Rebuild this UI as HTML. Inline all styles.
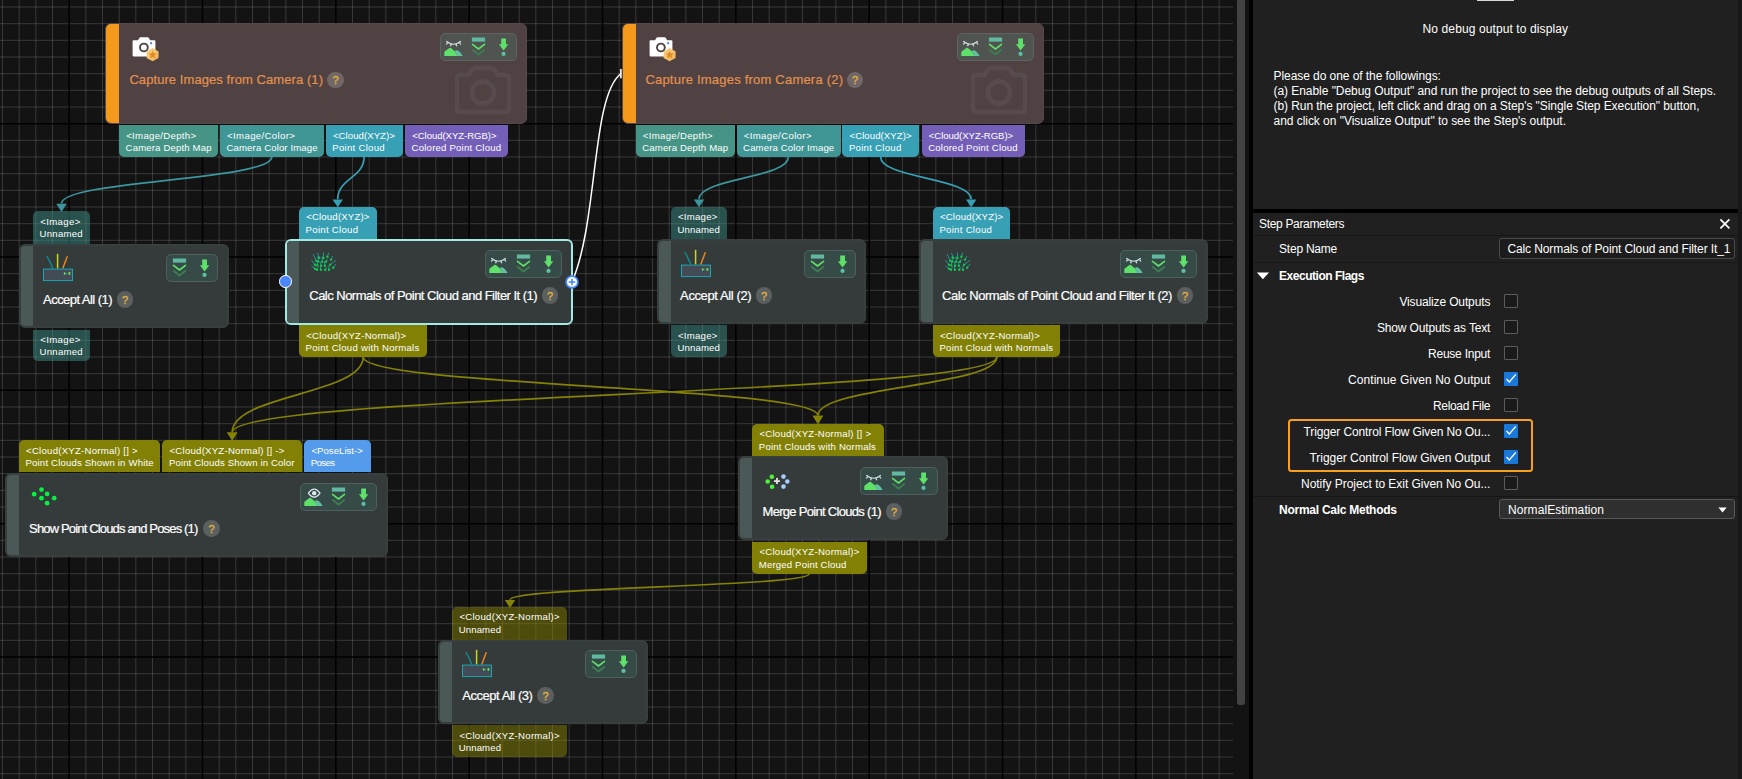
<!DOCTYPE html>
<html><head><meta charset="utf-8"><title>Graph Editor</title>
<style>
html,body{margin:0;padding:0}
body{width:1742px;height:779px;background:#131313;position:relative;overflow:hidden;font-family:"Liberation Sans",sans-serif}
.t{position:absolute;white-space:pre;margin:0;padding:0}
</style></head><body>
<svg style="position:absolute;left:0;top:0" width="1233" height="779" viewBox="0 0 1233 779"><path d="M2.5 0V779M19.17 0V779M35.83 0V779M52.5 0V779M85.84 0V779M102.5 0V779M119.17 0V779M135.84 0V779M152.5 0V779M169.17 0V779M185.84 0V779M219.17 0V779M235.84 0V779M252.51 0V779M269.17 0V779M285.84 0V779M302.51 0V779M319.17 0V779M352.51 0V779M369.17 0V779M385.84 0V779M402.51 0V779M419.18 0V779M435.84 0V779M452.51 0V779M485.84 0V779M502.51 0V779M519.18 0V779M535.84 0V779M552.51 0V779M569.18 0V779M585.85 0V779M619.18 0V779M635.85 0V779M652.51 0V779M669.18 0V779M685.85 0V779M702.51 0V779M719.18 0V779M752.52 0V779M769.18 0V779M785.85 0V779M802.52 0V779M819.18 0V779M835.85 0V779M852.52 0V779M885.85 0V779M902.52 0V779M919.19 0V779M935.85 0V779M952.52 0V779M969.19 0V779M985.85 0V779M1019.19 0V779M1035.85 0V779M1052.52 0V779M1069.19 0V779M1085.86 0V779M1102.52 0V779M1119.19 0V779M1152.52 0V779M1169.19 0V779M1185.86 0V779M1202.52 0V779M1219.19 0V779" stroke="#fff" stroke-opacity="0.155" stroke-width="1" fill="none"/><path d="M0 7.0H1233M0 23.67H1233M0 40.33H1233M0 57.0H1233M0 73.67H1233M0 90.34H1233M0 107.0H1233M0 140.34H1233M0 157.0H1233M0 173.67H1233M0 190.34H1233M0 207.0H1233M0 223.67H1233M0 240.34H1233M0 273.67H1233M0 290.34H1233M0 307.01H1233M0 323.67H1233M0 340.34H1233M0 357.01H1233M0 373.67H1233M0 407.01H1233M0 423.68H1233M0 440.34H1233M0 457.01H1233M0 473.68H1233M0 490.34H1233M0 507.01H1233M0 540.34H1233M0 557.01H1233M0 573.68H1233M0 590.35H1233M0 607.01H1233M0 623.68H1233M0 640.35H1233M0 673.68H1233M0 690.35H1233M0 707.01H1233M0 723.68H1233M0 740.35H1233M0 757.02H1233M0 773.68H1233" stroke="#fff" stroke-opacity="0.155" stroke-width="1" fill="none"/><path d="M69.17 0V779M202.5 0V779M335.84 0V779M469.18 0V779M602.51 0V779M735.85 0V779M869.18 0V779M1002.52 0V779M1135.86 0V779M0 123.67H1233M0 257.0H1233M0 390.34H1233M0 523.68H1233M0 657.01H1233" stroke="#000" stroke-width="1.5" fill="none"/></svg>
<svg style="position:absolute;left:0;top:0" width="1233" height="779" viewBox="0 0 1233 779"><path d="M271.8 157 C271.8 180.3 61.5 180.3 61.5 203.6" fill="none" stroke="#3c969e" stroke-width="1.7"/><path d="M56.3 203.8 L66.7 203.8 L61.5 212.1 Z" fill="#3c969e"/><path d="M364.1 157 C364.1 178.1 337.7 178.1 337.7 199.2" fill="none" stroke="#37a0b5" stroke-width="1.7"/><path d="M332.5 199.4 L342.9 199.4 L337.7 207.3 Z" fill="#37a0b5"/><path d="M788.4 157 C788.4 178.1 699 178.1 699 199.2" fill="none" stroke="#3c969e" stroke-width="1.7"/><path d="M693.8 199.4 L704.2 199.4 L699 207.2 Z" fill="#3c969e"/><path d="M880.6 157 C880.6 178.1 971.2 178.1 971.2 199.2" fill="none" stroke="#37a0b5" stroke-width="1.7"/><path d="M966.0 199.4 L976.4000000000001 199.4 L971.2 207.2 Z" fill="#37a0b5"/><path d="M363.2 357 C363.2 394.6 232.2 394.6 232.2 432.3" fill="none" stroke="#858307" stroke-width="1.7"/><path d="M227.0 432.5 L237.39999999999998 432.5 L232.2 440.6 Z" fill="#858307"/><path d="M996.8 357 C996.8 394.6 232.2 394.6 232.2 432.3" fill="none" stroke="#858307" stroke-width="1.7"/><path d="M227.0 432.5 L237.39999999999998 432.5 L232.2 440.6 Z" fill="#858307"/><path d="M363.2 357 C363.2 386.3 817.9 386.3 817.9 415.6" fill="none" stroke="#858307" stroke-width="1.7"/><path d="M812.6999999999999 415.8 L823.1 415.8 L817.9 423.9 Z" fill="#858307"/><path d="M996.8 357 C996.8 386.3 817.9 386.3 817.9 415.6" fill="none" stroke="#858307" stroke-width="1.7"/><path d="M812.6999999999999 415.8 L823.1 415.8 L817.9 423.9 Z" fill="#858307"/><path d="M809.3 573.7 C809.3 586.8 510 586.8 510 599.8" fill="none" stroke="#858307" stroke-width="1.7"/><path d="M504.8 600.0 L515.2 600.0 L510 607.9 Z" fill="#858307"/><path d="M572 282 C598.4 221.3 591.1 96.1 621 73.5" fill="none" stroke="#fff" stroke-width="1.5"/><path d="M620.9 69 L620.9 78.2" stroke="#fff" stroke-width="1.6"/></svg>
<div style="position:absolute;left:119px;top:124.7px;width:99.3px;height:32.1px;background:#469485;border-radius:0 0 5px 5px"></div>
<div style="position:absolute;left:219.9px;top:124.7px;width:104.3px;height:32.1px;background:#409595;border-radius:0 0 5px 5px"></div>
<div style="position:absolute;left:325.7px;top:124.7px;width:77.2px;height:32.1px;background:#37a0b5;border-radius:0 0 5px 5px"></div>
<div style="position:absolute;left:405px;top:124.7px;width:103px;height:32.1px;background:#745fb8;border-radius:0 0 5px 5px"></div>
<div style="position:absolute;left:635.6px;top:124.7px;width:99.3px;height:32.1px;background:#469485;border-radius:0 0 5px 5px"></div>
<div style="position:absolute;left:736.5px;top:124.7px;width:104.3px;height:32.1px;background:#409595;border-radius:0 0 5px 5px"></div>
<div style="position:absolute;left:842.3px;top:124.7px;width:77.2px;height:32.1px;background:#37a0b5;border-radius:0 0 5px 5px"></div>
<div style="position:absolute;left:921.6px;top:124.7px;width:103.0px;height:32.1px;background:#745fb8;border-radius:0 0 5px 5px"></div>
<div style="position:absolute;left:33px;top:211px;width:57.2px;height:34px;background:rgba(64,146,138,0.5);border-radius:5px 5px 0 0"></div>
<div style="position:absolute;left:33px;top:329.5px;width:57.2px;height:31.5px;background:rgba(64,146,138,0.5);border-radius:0 0 5px 5px"></div>
<div style="position:absolute;left:299px;top:206.9px;width:78px;height:33.1px;background:#37a0b5;border-radius:5px 5px 0 0"></div>
<div style="position:absolute;left:299px;top:324px;width:128.1px;height:33px;background:#828105;border-radius:0 0 5px 5px"></div>
<div style="position:absolute;left:670.8px;top:206.9px;width:56.5px;height:34.1px;background:rgba(64,146,138,0.5);border-radius:5px 5px 0 0"></div>
<div style="position:absolute;left:670.8px;top:324.9px;width:56.5px;height:32.1px;background:rgba(64,146,138,0.5);border-radius:0 0 5px 5px"></div>
<div style="position:absolute;left:932.8px;top:206.9px;width:77.6px;height:33.6px;background:#37a0b5;border-radius:5px 5px 0 0"></div>
<div style="position:absolute;left:932.8px;top:324.9px;width:127.4px;height:32.1px;background:#828105;border-radius:0 0 5px 5px"></div>
<div style="position:absolute;left:18.9px;top:440.1px;width:141.5px;height:31.9px;background:#828105;border-radius:5px 5px 0 0"></div>
<div style="position:absolute;left:162.3px;top:440.1px;width:139.7px;height:31.9px;background:#828105;border-radius:5px 5px 0 0"></div>
<div style="position:absolute;left:304.2px;top:440.1px;width:66.7px;height:31.9px;background:#559beb;border-radius:5px 5px 0 0"></div>
<div style="position:absolute;left:752.2px;top:424.2px;width:131.6px;height:33.8px;background:#828105;border-radius:5px 5px 0 0"></div>
<div style="position:absolute;left:752.2px;top:542px;width:115.2px;height:31.8px;background:#828105;border-radius:0 0 5px 5px"></div>
<div style="position:absolute;left:452.2px;top:606.9px;width:115.0px;height:33.1px;background:rgba(136,134,6,0.5);border-radius:5px 5px 0 0"></div>
<div style="position:absolute;left:452.2px;top:725px;width:115.0px;height:31.7px;background:rgba(136,134,6,0.5);border-radius:0 0 5px 5px"></div>
<div style="position:absolute;left:105.2px;top:23.1px;width:420.0px;height:99.1px;background:#504242;border:1px solid #55474b;border-radius:6px;overflow:hidden"><div style="position:absolute;left:0;top:0;width:12.8px;height:100%;background:#f3991c"></div></div>
<svg style="position:absolute;left:453.5px;top:64px" width="58" height="52" viewBox="0 0 58 52">
<path d="M6 11 L14.5 11 L18 5.5 Q19 4 21 4 L37 4 Q39 4 40 5.5 L43.5 11 L52 11 Q55 11 55 14 L55 45 Q55 48 52 48 L6 48 Q3 48 3 45 L3 14 Q3 11 6 11 Z" fill="none" stroke="#584b4e" stroke-width="4.6" stroke-linejoin="round"/>
<circle cx="29" cy="28.5" r="11" fill="none" stroke="#584b4e" stroke-width="4.8"/>
</svg>
<svg style="position:absolute;left:130px;top:35px" width="32" height="28" viewBox="0 0 32 28">
<defs><linearGradient id="hx130" x1="0" y1="0" x2="1" y2="1"><stop offset="0" stop-color="#fad488"/><stop offset="1" stop-color="#f0ad55"/></linearGradient></defs>
<path d="M3.6 5.2 L8 5.2 L9.4 2.9 Q9.8 2.3 10.6 2.3 L17.6 2.3 Q18.4 2.3 18.8 2.9 L20.2 5.2 L24.4 5.2 Q25.4 5.2 25.4 6.2 L25.4 20.3 Q25.4 21.4 24.4 21.4 L3.6 21.4 Q2.6 21.4 2.6 20.3 L2.6 6.2 Q2.6 5.2 3.6 5.2 Z" fill="#fff"/>
<circle cx="13.9" cy="12.5" r="3.9" fill="none" stroke="#504242" stroke-width="1.9"/>
<rect x="20.1" y="7.2" width="2" height="2" fill="#4285f4"/>
<path d="M22.6 13.1 L28.6 16.4 L28.6 23 L22.6 26.3 L16.6 23 L16.6 16.4 Z" fill="url(#hx130)"/>
<path d="M22.6 15.6 L23.7 18.5 L26.8 18.6 L24.4 20.5 L25.2 23.5 L22.6 21.8 L20 23.5 L20.8 20.5 L18.4 18.6 L21.5 18.5 Z" fill="#e08a22"/>
</svg>
<div style="position:absolute;left:439.49999999999994px;top:33.2px;width:75.3px;height:25.9px;background:#4f5450;border:1px solid #5f6461;border-radius:5px"></div><svg style="position:absolute;left:439.5px;top:33.2px" width="26" height="28" viewBox="0 0 26 28">
<path d="M4.3 22.9 L4.3 19.7 Q4.3 18.8 5 18.3 L8.7 15.4 Q10.1 14.3 11.5 15.4 L15.3 18.7 L17.3 22.9 Z" fill="#5ee06a"/>
<path d="M14.7 18.2 Q16.5 16.5 18.6 18 Q21 19.8 22.7 22.9 L17.2 22.9 L15.3 18.7 Z" fill="#62bfa0"/>
<path d="M6.3 8.2 Q13.55 14.3 20.8 8.2" fill="none" stroke="#d9e2ea" stroke-width="1.15"/>
<path d="M7.6 9.6 L6.4 11.5 M11.4 11.0 L10.6 13.3 M15.8 11.0 L16.8 13.3 M19.6 9.6 L20.9 11.5" stroke="#d9e2ea" stroke-width="1.25" fill="none"/>
</svg><svg style="position:absolute;left:465.5px;top:33.2px" width="25" height="28" viewBox="0 0 25 28">
<rect x="5.9" y="4.5" width="13.2" height="4.1" fill="#62b9a2"/>
<path d="M6.5 11.3 L12.5 16 L18.5 11.3" fill="none" stroke="#5ee06a" stroke-width="1.6" stroke-linecap="round" stroke-linejoin="round"/>
<path d="M6.8 17 L12.5 21.5 L18.2 17" fill="none" stroke="#3f7d53" stroke-width="1.7" stroke-linecap="round" stroke-linejoin="round"/>
</svg><svg style="position:absolute;left:490.5px;top:33.2px" width="25" height="28" viewBox="0 0 25 28">
<path d="M10.2 5.5 L15 5.5 L15 11.2 L17.3 11.2 L12.6 17.6 L7.9 11.2 L10.2 11.2 Z" fill="#5ee06a"/>
<circle cx="12.5" cy="20.9" r="2.1" fill="#5cc0a2"/>
</svg>
<div style="position:absolute;left:327.3px;top:71.8px;width:16.4px;height:16.4px;border-radius:50%;background:#726767"></div>
<div style="position:absolute;left:622.2px;top:23.1px;width:420.0px;height:99.1px;background:#504242;border:1px solid #55474b;border-radius:6px;overflow:hidden"><div style="position:absolute;left:0;top:0;width:12.8px;height:100%;background:#f3991c"></div></div>
<svg style="position:absolute;left:970.1px;top:64px" width="58" height="52" viewBox="0 0 58 52">
<path d="M6 11 L14.5 11 L18 5.5 Q19 4 21 4 L37 4 Q39 4 40 5.5 L43.5 11 L52 11 Q55 11 55 14 L55 45 Q55 48 52 48 L6 48 Q3 48 3 45 L3 14 Q3 11 6 11 Z" fill="none" stroke="#584b4e" stroke-width="4.6" stroke-linejoin="round"/>
<circle cx="29" cy="28.5" r="11" fill="none" stroke="#584b4e" stroke-width="4.8"/>
</svg>
<svg style="position:absolute;left:646.6px;top:35px" width="32" height="28" viewBox="0 0 32 28">
<defs><linearGradient id="hx646.6" x1="0" y1="0" x2="1" y2="1"><stop offset="0" stop-color="#fad488"/><stop offset="1" stop-color="#f0ad55"/></linearGradient></defs>
<path d="M3.6 5.2 L8 5.2 L9.4 2.9 Q9.8 2.3 10.6 2.3 L17.6 2.3 Q18.4 2.3 18.8 2.9 L20.2 5.2 L24.4 5.2 Q25.4 5.2 25.4 6.2 L25.4 20.3 Q25.4 21.4 24.4 21.4 L3.6 21.4 Q2.6 21.4 2.6 20.3 L2.6 6.2 Q2.6 5.2 3.6 5.2 Z" fill="#fff"/>
<circle cx="13.9" cy="12.5" r="3.9" fill="none" stroke="#504242" stroke-width="1.9"/>
<rect x="20.1" y="7.2" width="2" height="2" fill="#4285f4"/>
<path d="M22.6 13.1 L28.6 16.4 L28.6 23 L22.6 26.3 L16.6 23 L16.6 16.4 Z" fill="url(#hx646.6)"/>
<path d="M22.6 15.6 L23.7 18.5 L26.8 18.6 L24.4 20.5 L25.2 23.5 L22.6 21.8 L20 23.5 L20.8 20.5 L18.4 18.6 L21.5 18.5 Z" fill="#e08a22"/>
</svg>
<div style="position:absolute;left:956.5px;top:33.2px;width:75.3px;height:25.9px;background:#4f5450;border:1px solid #5f6461;border-radius:5px"></div><svg style="position:absolute;left:956.5px;top:33.2px" width="26" height="28" viewBox="0 0 26 28">
<path d="M4.3 22.9 L4.3 19.7 Q4.3 18.8 5 18.3 L8.7 15.4 Q10.1 14.3 11.5 15.4 L15.3 18.7 L17.3 22.9 Z" fill="#5ee06a"/>
<path d="M14.7 18.2 Q16.5 16.5 18.6 18 Q21 19.8 22.7 22.9 L17.2 22.9 L15.3 18.7 Z" fill="#62bfa0"/>
<path d="M6.3 8.2 Q13.55 14.3 20.8 8.2" fill="none" stroke="#d9e2ea" stroke-width="1.15"/>
<path d="M7.6 9.6 L6.4 11.5 M11.4 11.0 L10.6 13.3 M15.8 11.0 L16.8 13.3 M19.6 9.6 L20.9 11.5" stroke="#d9e2ea" stroke-width="1.25" fill="none"/>
</svg><svg style="position:absolute;left:982.5px;top:33.2px" width="25" height="28" viewBox="0 0 25 28">
<rect x="5.9" y="4.5" width="13.2" height="4.1" fill="#62b9a2"/>
<path d="M6.5 11.3 L12.5 16 L18.5 11.3" fill="none" stroke="#5ee06a" stroke-width="1.6" stroke-linecap="round" stroke-linejoin="round"/>
<path d="M6.8 17 L12.5 21.5 L18.2 17" fill="none" stroke="#3f7d53" stroke-width="1.7" stroke-linecap="round" stroke-linejoin="round"/>
</svg><svg style="position:absolute;left:1007.5px;top:33.2px" width="25" height="28" viewBox="0 0 25 28">
<path d="M10.2 5.5 L15 5.5 L15 11.2 L17.3 11.2 L12.6 17.6 L7.9 11.2 L10.2 11.2 Z" fill="#5ee06a"/>
<circle cx="12.5" cy="20.9" r="2.1" fill="#5cc0a2"/>
</svg>
<div style="position:absolute;left:846.9px;top:71.8px;width:16.4px;height:16.4px;border-radius:50%;background:#726767"></div>
<div style="position:absolute;left:19.1px;top:243.7px;width:205.8px;height:80.3px;background:#353b3b;border:2px solid #383f3f;border-radius:6px;overflow:hidden"><div style="position:absolute;left:0;top:0;width:12px;height:100%;background:#4a5857"></div></div>
<svg style="position:absolute;left:40px;top:250px" width="36" height="34" viewBox="0 0 36 34">
<path d="M6.8 6.2 Q9.5 10.5 12.8 18.4" stroke="#0f8c8c" stroke-width="1.4" fill="none"/>
<path d="M17.6 3.8 L17.6 18.4" stroke="#c6d621" stroke-width="1.5" fill="none"/>
<path d="M27.4 6.2 L22.7 18.4" stroke="#e8861f" stroke-width="1.5" fill="none"/>
<rect x="3.5" y="19.1" width="29" height="11.5" fill="#434b57" stroke="#1aa7b2" stroke-width="1"/>
<path d="M23.9 21.9 L26.8 23.4 L23.9 24.9 Z" fill="#5ee06a"/>
<rect x="28.5" y="22" width="1.8" height="2.8" fill="#5ee06a"/>
</svg>
<div style="position:absolute;left:166.10000000000002px;top:253.89999999999998px;width:50.3px;height:25.9px;background:#364b47;border:1px solid #4c615d;border-radius:5px"></div><svg style="position:absolute;left:167.1px;top:253.89999999999998px" width="25" height="28" viewBox="0 0 25 28">
<rect x="5.9" y="4.5" width="13.2" height="4.1" fill="#62b9a2"/>
<path d="M6.5 11.3 L12.5 16 L18.5 11.3" fill="none" stroke="#5ee06a" stroke-width="1.6" stroke-linecap="round" stroke-linejoin="round"/>
<path d="M6.8 17 L12.5 21.5 L18.2 17" fill="none" stroke="#3f7d53" stroke-width="1.7" stroke-linecap="round" stroke-linejoin="round"/>
</svg><svg style="position:absolute;left:192.1px;top:253.89999999999998px" width="25" height="28" viewBox="0 0 25 28">
<path d="M10.2 5.5 L15 5.5 L15 11.2 L17.3 11.2 L12.6 17.6 L7.9 11.2 L10.2 11.2 Z" fill="#5ee06a"/>
<circle cx="12.5" cy="20.9" r="2.1" fill="#5cc0a2"/>
</svg>
<div style="position:absolute;left:116.7px;top:291.3px;width:16.4px;height:16.4px;border-radius:50%;background:#5b5f5f"></div>
<div style="position:absolute;left:285px;top:239.2px;width:283.7px;height:81.4px;background:#353b3b;border:2px solid #a2ebe2;border-radius:6px;overflow:hidden"><div style="position:absolute;left:0;top:0;width:12px;height:100%;background:#4a5857"></div></div>
<svg style="position:absolute;left:300px;top:245px" width="50" height="35" viewBox="0 0 50 35"><path d="M19.1 12.8 L17.7 8.3" stroke="#1fb3b0" stroke-width="0.95" stroke-linecap="round" opacity="0.8"/><path d="M23.4 13.0 L23.6 7.9" stroke="#1fb3b0" stroke-width="0.95" stroke-linecap="round" opacity="0.8"/><path d="M27.4 11.7 L28.7 7.9" stroke="#1fb3b0" stroke-width="0.95" stroke-linecap="round" opacity="0.8"/><path d="M16.2 15.7 L13.3 9.4" stroke="#1fb3b0" stroke-width="0.95" stroke-linecap="round" opacity="0.8"/><path d="M18.4 16.6 L18.0 11.5" stroke="#1fb3b0" stroke-width="0.95" stroke-linecap="round" opacity="0.8"/><path d="M22.2 16.8 L22.0 12.0" stroke="#1fb3b0" stroke-width="0.95" stroke-linecap="round" opacity="0.8"/><path d="M26.0 16.8 L27.3 14.3" stroke="#1fb3b0" stroke-width="0.95" stroke-linecap="round" opacity="0.8"/><path d="M31.0 14.6 L32.6 11.5" stroke="#1fb3b0" stroke-width="0.95" stroke-linecap="round" opacity="0.8"/><path d="M15.0 19.8 L11.7 15.5" stroke="#1fb3b0" stroke-width="0.95" stroke-linecap="round" opacity="0.8"/><path d="M17.3 20.4 L17.6 16.5" stroke="#1fb3b0" stroke-width="0.95" stroke-linecap="round" opacity="0.8"/><path d="M21.1 20.7 L20.5 17.2" stroke="#1fb3b0" stroke-width="0.95" stroke-linecap="round" opacity="0.8"/><path d="M24.9 20.7 L24.3 16.8" stroke="#1fb3b0" stroke-width="0.95" stroke-linecap="round" opacity="0.8"/><path d="M30.1 19.8 L35.7 15.5" stroke="#1fb3b0" stroke-width="0.95" stroke-linecap="round" opacity="0.8"/><path d="M15.0 23.8 L11.7 21.1" stroke="#1fb3b0" stroke-width="0.95" stroke-linecap="round" opacity="0.8"/><path d="M17.0 24.7 L18.3 22.2" stroke="#1fb3b0" stroke-width="0.95" stroke-linecap="round" opacity="0.8"/><path d="M20.9 24.7 L20.3 21.6" stroke="#1fb3b0" stroke-width="0.95" stroke-linecap="round" opacity="0.8"/><path d="M25.2 24.7 L26.4 22.2" stroke="#1fb3b0" stroke-width="0.95" stroke-linecap="round" opacity="0.8"/><path d="M29.0 24.7 L28.8 21.2" stroke="#1fb3b0" stroke-width="0.95" stroke-linecap="round" opacity="0.8"/><path d="M33.2 22.7 L35.9 19.1" stroke="#1fb3b0" stroke-width="0.95" stroke-linecap="round" opacity="0.8"/><circle cx="19.1" cy="12.8" r="1.2" fill="#10c850"/><circle cx="23.4" cy="13.0" r="1.2" fill="#10c850"/><circle cx="27.4" cy="11.7" r="1.2" fill="#10c850"/><circle cx="16.2" cy="15.7" r="1.2" fill="#10c850"/><circle cx="18.4" cy="16.6" r="1.2" fill="#10c850"/><circle cx="22.2" cy="16.8" r="1.2" fill="#10c850"/><circle cx="26.0" cy="16.8" r="1.2" fill="#10c850"/><circle cx="31.0" cy="14.6" r="1.2" fill="#10c850"/><circle cx="15.0" cy="19.8" r="1.2" fill="#10c850"/><circle cx="17.3" cy="20.4" r="1.2" fill="#10c850"/><circle cx="21.1" cy="20.7" r="1.2" fill="#10c850"/><circle cx="24.9" cy="20.7" r="1.2" fill="#10c850"/><circle cx="30.1" cy="19.8" r="1.2" fill="#10c850"/><circle cx="15.0" cy="23.8" r="1.2" fill="#10c850"/><circle cx="17.0" cy="24.7" r="1.2" fill="#10c850"/><circle cx="20.9" cy="24.7" r="1.2" fill="#10c850"/><circle cx="25.2" cy="24.7" r="1.2" fill="#10c850"/><circle cx="29.0" cy="24.7" r="1.2" fill="#10c850"/><circle cx="33.2" cy="22.7" r="1.2" fill="#10c850"/></svg>
<div style="position:absolute;left:484.90000000000003px;top:250.1px;width:75.3px;height:25.9px;background:#364b47;border:1px solid #4c615d;border-radius:5px"></div><svg style="position:absolute;left:484.9px;top:250.1px" width="26" height="28" viewBox="0 0 26 28">
<path d="M4.3 22.9 L4.3 19.7 Q4.3 18.8 5 18.3 L8.7 15.4 Q10.1 14.3 11.5 15.4 L15.3 18.7 L17.3 22.9 Z" fill="#5ee06a"/>
<path d="M14.7 18.2 Q16.5 16.5 18.6 18 Q21 19.8 22.7 22.9 L17.2 22.9 L15.3 18.7 Z" fill="#62bfa0"/>
<path d="M6.3 8.2 Q13.55 14.3 20.8 8.2" fill="none" stroke="#d9e2ea" stroke-width="1.15"/>
<path d="M7.6 9.6 L6.4 11.5 M11.4 11.0 L10.6 13.3 M15.8 11.0 L16.8 13.3 M19.6 9.6 L20.9 11.5" stroke="#d9e2ea" stroke-width="1.25" fill="none"/>
</svg><svg style="position:absolute;left:510.9px;top:250.1px" width="25" height="28" viewBox="0 0 25 28">
<rect x="5.9" y="4.5" width="13.2" height="4.1" fill="#62b9a2"/>
<path d="M6.5 11.3 L12.5 16 L18.5 11.3" fill="none" stroke="#5ee06a" stroke-width="1.6" stroke-linecap="round" stroke-linejoin="round"/>
<path d="M6.8 17 L12.5 21.5 L18.2 17" fill="none" stroke="#3f7d53" stroke-width="1.7" stroke-linecap="round" stroke-linejoin="round"/>
</svg><svg style="position:absolute;left:535.9px;top:250.1px" width="25" height="28" viewBox="0 0 25 28">
<path d="M10.2 5.5 L15 5.5 L15 11.2 L17.3 11.2 L12.6 17.6 L7.9 11.2 L10.2 11.2 Z" fill="#5ee06a"/>
<circle cx="12.5" cy="20.9" r="2.1" fill="#5cc0a2"/>
</svg>
<div style="position:absolute;left:541.9px;top:287.3px;width:16.4px;height:16.4px;border-radius:50%;background:#5b5f5f"></div>
<div style="position:absolute;left:656.9px;top:239.4px;width:205.4px;height:80.4px;background:#353b3b;border:2px solid #383f3f;border-radius:6px;overflow:hidden"><div style="position:absolute;left:0;top:0;width:12px;height:100%;background:#4a5857"></div></div>
<svg style="position:absolute;left:677.8px;top:246px" width="36" height="34" viewBox="0 0 36 34">
<path d="M6.8 6.2 Q9.5 10.5 12.8 18.4" stroke="#0f8c8c" stroke-width="1.4" fill="none"/>
<path d="M17.6 3.8 L17.6 18.4" stroke="#c6d621" stroke-width="1.5" fill="none"/>
<path d="M27.4 6.2 L22.7 18.4" stroke="#e8861f" stroke-width="1.5" fill="none"/>
<rect x="3.5" y="19.1" width="29" height="11.5" fill="#434b57" stroke="#1aa7b2" stroke-width="1"/>
<path d="M23.9 21.9 L26.8 23.4 L23.9 24.9 Z" fill="#5ee06a"/>
<rect x="28.5" y="22" width="1.8" height="2.8" fill="#5ee06a"/>
</svg>
<div style="position:absolute;left:803.5px;top:250.20000000000002px;width:50.3px;height:25.9px;background:#364b47;border:1px solid #4c615d;border-radius:5px"></div><svg style="position:absolute;left:804.5px;top:250.20000000000002px" width="25" height="28" viewBox="0 0 25 28">
<rect x="5.9" y="4.5" width="13.2" height="4.1" fill="#62b9a2"/>
<path d="M6.5 11.3 L12.5 16 L18.5 11.3" fill="none" stroke="#5ee06a" stroke-width="1.6" stroke-linecap="round" stroke-linejoin="round"/>
<path d="M6.8 17 L12.5 21.5 L18.2 17" fill="none" stroke="#3f7d53" stroke-width="1.7" stroke-linecap="round" stroke-linejoin="round"/>
</svg><svg style="position:absolute;left:829.5px;top:250.20000000000002px" width="25" height="28" viewBox="0 0 25 28">
<path d="M10.2 5.5 L15 5.5 L15 11.2 L17.3 11.2 L12.6 17.6 L7.9 11.2 L10.2 11.2 Z" fill="#5ee06a"/>
<circle cx="12.5" cy="20.9" r="2.1" fill="#5cc0a2"/>
</svg>
<div style="position:absolute;left:755.9px;top:287.3px;width:16.4px;height:16.4px;border-radius:50%;background:#5b5f5f"></div>
<div style="position:absolute;left:918.8px;top:239.4px;width:285.2px;height:80.4px;background:#353b3b;border:2px solid #383f3f;border-radius:6px;overflow:hidden"><div style="position:absolute;left:0;top:0;width:12px;height:100%;background:#4a5857"></div></div>
<svg style="position:absolute;left:933.5px;top:245px" width="50" height="35" viewBox="0 0 50 35"><path d="M19.1 12.8 L17.7 8.3" stroke="#1fb3b0" stroke-width="0.95" stroke-linecap="round" opacity="0.8"/><path d="M23.4 13.0 L23.6 7.9" stroke="#1fb3b0" stroke-width="0.95" stroke-linecap="round" opacity="0.8"/><path d="M27.4 11.7 L28.7 7.9" stroke="#1fb3b0" stroke-width="0.95" stroke-linecap="round" opacity="0.8"/><path d="M16.2 15.7 L13.3 9.4" stroke="#1fb3b0" stroke-width="0.95" stroke-linecap="round" opacity="0.8"/><path d="M18.4 16.6 L18.0 11.5" stroke="#1fb3b0" stroke-width="0.95" stroke-linecap="round" opacity="0.8"/><path d="M22.2 16.8 L22.0 12.0" stroke="#1fb3b0" stroke-width="0.95" stroke-linecap="round" opacity="0.8"/><path d="M26.0 16.8 L27.3 14.3" stroke="#1fb3b0" stroke-width="0.95" stroke-linecap="round" opacity="0.8"/><path d="M31.0 14.6 L32.6 11.5" stroke="#1fb3b0" stroke-width="0.95" stroke-linecap="round" opacity="0.8"/><path d="M15.0 19.8 L11.7 15.5" stroke="#1fb3b0" stroke-width="0.95" stroke-linecap="round" opacity="0.8"/><path d="M17.3 20.4 L17.6 16.5" stroke="#1fb3b0" stroke-width="0.95" stroke-linecap="round" opacity="0.8"/><path d="M21.1 20.7 L20.5 17.2" stroke="#1fb3b0" stroke-width="0.95" stroke-linecap="round" opacity="0.8"/><path d="M24.9 20.7 L24.3 16.8" stroke="#1fb3b0" stroke-width="0.95" stroke-linecap="round" opacity="0.8"/><path d="M30.1 19.8 L35.7 15.5" stroke="#1fb3b0" stroke-width="0.95" stroke-linecap="round" opacity="0.8"/><path d="M15.0 23.8 L11.7 21.1" stroke="#1fb3b0" stroke-width="0.95" stroke-linecap="round" opacity="0.8"/><path d="M17.0 24.7 L18.3 22.2" stroke="#1fb3b0" stroke-width="0.95" stroke-linecap="round" opacity="0.8"/><path d="M20.9 24.7 L20.3 21.6" stroke="#1fb3b0" stroke-width="0.95" stroke-linecap="round" opacity="0.8"/><path d="M25.2 24.7 L26.4 22.2" stroke="#1fb3b0" stroke-width="0.95" stroke-linecap="round" opacity="0.8"/><path d="M29.0 24.7 L28.8 21.2" stroke="#1fb3b0" stroke-width="0.95" stroke-linecap="round" opacity="0.8"/><path d="M33.2 22.7 L35.9 19.1" stroke="#1fb3b0" stroke-width="0.95" stroke-linecap="round" opacity="0.8"/><circle cx="19.1" cy="12.8" r="1.2" fill="#10c850"/><circle cx="23.4" cy="13.0" r="1.2" fill="#10c850"/><circle cx="27.4" cy="11.7" r="1.2" fill="#10c850"/><circle cx="16.2" cy="15.7" r="1.2" fill="#10c850"/><circle cx="18.4" cy="16.6" r="1.2" fill="#10c850"/><circle cx="22.2" cy="16.8" r="1.2" fill="#10c850"/><circle cx="26.0" cy="16.8" r="1.2" fill="#10c850"/><circle cx="31.0" cy="14.6" r="1.2" fill="#10c850"/><circle cx="15.0" cy="19.8" r="1.2" fill="#10c850"/><circle cx="17.3" cy="20.4" r="1.2" fill="#10c850"/><circle cx="21.1" cy="20.7" r="1.2" fill="#10c850"/><circle cx="24.9" cy="20.7" r="1.2" fill="#10c850"/><circle cx="30.1" cy="19.8" r="1.2" fill="#10c850"/><circle cx="15.0" cy="23.8" r="1.2" fill="#10c850"/><circle cx="17.0" cy="24.7" r="1.2" fill="#10c850"/><circle cx="20.9" cy="24.7" r="1.2" fill="#10c850"/><circle cx="25.2" cy="24.7" r="1.2" fill="#10c850"/><circle cx="29.0" cy="24.7" r="1.2" fill="#10c850"/><circle cx="33.2" cy="22.7" r="1.2" fill="#10c850"/></svg>
<div style="position:absolute;left:1120.2px;top:250.20000000000002px;width:75.3px;height:25.9px;background:#364b47;border:1px solid #4c615d;border-radius:5px"></div><svg style="position:absolute;left:1120.2px;top:250.20000000000002px" width="26" height="28" viewBox="0 0 26 28">
<path d="M4.3 22.9 L4.3 19.7 Q4.3 18.8 5 18.3 L8.7 15.4 Q10.1 14.3 11.5 15.4 L15.3 18.7 L17.3 22.9 Z" fill="#5ee06a"/>
<path d="M14.7 18.2 Q16.5 16.5 18.6 18 Q21 19.8 22.7 22.9 L17.2 22.9 L15.3 18.7 Z" fill="#62bfa0"/>
<path d="M6.3 8.2 Q13.55 14.3 20.8 8.2" fill="none" stroke="#d9e2ea" stroke-width="1.15"/>
<path d="M7.6 9.6 L6.4 11.5 M11.4 11.0 L10.6 13.3 M15.8 11.0 L16.8 13.3 M19.6 9.6 L20.9 11.5" stroke="#d9e2ea" stroke-width="1.25" fill="none"/>
</svg><svg style="position:absolute;left:1146.2px;top:250.20000000000002px" width="25" height="28" viewBox="0 0 25 28">
<rect x="5.9" y="4.5" width="13.2" height="4.1" fill="#62b9a2"/>
<path d="M6.5 11.3 L12.5 16 L18.5 11.3" fill="none" stroke="#5ee06a" stroke-width="1.6" stroke-linecap="round" stroke-linejoin="round"/>
<path d="M6.8 17 L12.5 21.5 L18.2 17" fill="none" stroke="#3f7d53" stroke-width="1.7" stroke-linecap="round" stroke-linejoin="round"/>
</svg><svg style="position:absolute;left:1171.2px;top:250.20000000000002px" width="25" height="28" viewBox="0 0 25 28">
<path d="M10.2 5.5 L15 5.5 L15 11.2 L17.3 11.2 L12.6 17.6 L7.9 11.2 L10.2 11.2 Z" fill="#5ee06a"/>
<circle cx="12.5" cy="20.9" r="2.1" fill="#5cc0a2"/>
</svg>
<div style="position:absolute;left:1176.8999999999999px;top:287.3px;width:16.4px;height:16.4px;border-radius:50%;background:#5b5f5f"></div>
<div style="position:absolute;left:4.9px;top:473.1px;width:378.9px;height:79.7px;background:#353b3b;border:2px solid #383f3f;border-radius:6px;overflow:hidden"><div style="position:absolute;left:0;top:0;width:12px;height:100%;background:#4a5857"></div></div>
<svg style="position:absolute;left:20px;top:480px" width="50" height="35" viewBox="0 0 50 35"><circle cx="21.5" cy="9.6" r="2.35" fill="#04f243"/><circle cx="14.2" cy="14.2" r="2.35" fill="#04f243"/><circle cx="27.1" cy="13.9" r="2.35" fill="#04f243"/><circle cx="21.5" cy="18.2" r="2.35" fill="#04f243"/><circle cx="34.2" cy="18.2" r="2.35" fill="#04f243"/><circle cx="27.1" cy="23.2" r="2.35" fill="#04f243"/></svg>
<div style="position:absolute;left:300.0px;top:483.3px;width:75.3px;height:25.9px;background:#364b47;border:1px solid #4c615d;border-radius:5px"></div><svg style="position:absolute;left:300.0px;top:483.3px" width="26" height="28" viewBox="0 0 26 28">
<path d="M4.3 22.9 L4.3 19.7 Q4.3 18.8 5 18.3 L8.7 15.4 Q10.1 14.3 11.5 15.4 L15.3 18.7 L17.3 22.9 Z" fill="#5ee06a"/>
<path d="M14.7 18.2 Q16.5 16.5 18.6 18 Q21 19.8 22.7 22.9 L17.2 22.9 L15.3 18.7 Z" fill="#62bfa0"/>
<path d="M8.4 10.15 Q14.2 2 20 10.15 Q14.2 18.3 8.4 10.15 Z" fill="none" stroke="#dde6f0" stroke-width="1.3" stroke-linejoin="round"/>
<circle cx="14.2" cy="10.15" r="2.2" fill="#dde6f0"/>
</svg><svg style="position:absolute;left:326.0px;top:483.3px" width="25" height="28" viewBox="0 0 25 28">
<rect x="5.9" y="4.5" width="13.2" height="4.1" fill="#62b9a2"/>
<path d="M6.5 11.3 L12.5 16 L18.5 11.3" fill="none" stroke="#5ee06a" stroke-width="1.6" stroke-linecap="round" stroke-linejoin="round"/>
<path d="M6.8 17 L12.5 21.5 L18.2 17" fill="none" stroke="#3f7d53" stroke-width="1.7" stroke-linecap="round" stroke-linejoin="round"/>
</svg><svg style="position:absolute;left:351.0px;top:483.3px" width="25" height="28" viewBox="0 0 25 28">
<path d="M10.2 5.5 L15 5.5 L15 11.2 L17.3 11.2 L12.6 17.6 L7.9 11.2 L10.2 11.2 Z" fill="#5ee06a"/>
<circle cx="12.5" cy="20.9" r="2.1" fill="#5cc0a2"/>
</svg>
<div style="position:absolute;left:203.4px;top:520.3px;width:16.4px;height:16.4px;border-radius:50%;background:#5b5f5f"></div>
<div style="position:absolute;left:738.2px;top:456.4px;width:206.0px;height:80.1px;background:#353b3b;border:2px solid #383f3f;border-radius:6px;overflow:hidden"><div style="position:absolute;left:0;top:0;width:12px;height:100%;background:#4a5857"></div></div>
<svg style="position:absolute;left:755px;top:465px" width="50" height="35" viewBox="0 0 50 35"><circle cx="16.8" cy="11.7" r="2.3" fill="#4df53a"/><circle cx="12.7" cy="16.5" r="2.3" fill="#4df53a"/><circle cx="17.1" cy="21.7" r="2.3" fill="#4df53a"/><circle cx="28.5" cy="11.6" r="2.3" fill="#a8ccff"/><circle cx="32.3" cy="16.5" r="2.3" fill="#a8ccff"/><circle cx="28.5" cy="21.6" r="2.3" fill="#a8ccff"/><path d="M19 16.1 L25 16.1 M22 13.1 L22 19.1" stroke="#e4e4e4" stroke-width="1.8"/></svg>
<div style="position:absolute;left:860.4000000000001px;top:467.2px;width:75.3px;height:25.9px;background:#364b47;border:1px solid #4c615d;border-radius:5px"></div><svg style="position:absolute;left:860.4px;top:467.2px" width="26" height="28" viewBox="0 0 26 28">
<path d="M4.3 22.9 L4.3 19.7 Q4.3 18.8 5 18.3 L8.7 15.4 Q10.1 14.3 11.5 15.4 L15.3 18.7 L17.3 22.9 Z" fill="#5ee06a"/>
<path d="M14.7 18.2 Q16.5 16.5 18.6 18 Q21 19.8 22.7 22.9 L17.2 22.9 L15.3 18.7 Z" fill="#62bfa0"/>
<path d="M6.3 8.2 Q13.55 14.3 20.8 8.2" fill="none" stroke="#d9e2ea" stroke-width="1.15"/>
<path d="M7.6 9.6 L6.4 11.5 M11.4 11.0 L10.6 13.3 M15.8 11.0 L16.8 13.3 M19.6 9.6 L20.9 11.5" stroke="#d9e2ea" stroke-width="1.25" fill="none"/>
</svg><svg style="position:absolute;left:886.4px;top:467.2px" width="25" height="28" viewBox="0 0 25 28">
<rect x="5.9" y="4.5" width="13.2" height="4.1" fill="#62b9a2"/>
<path d="M6.5 11.3 L12.5 16 L18.5 11.3" fill="none" stroke="#5ee06a" stroke-width="1.6" stroke-linecap="round" stroke-linejoin="round"/>
<path d="M6.8 17 L12.5 21.5 L18.2 17" fill="none" stroke="#3f7d53" stroke-width="1.7" stroke-linecap="round" stroke-linejoin="round"/>
</svg><svg style="position:absolute;left:911.4px;top:467.2px" width="25" height="28" viewBox="0 0 25 28">
<path d="M10.2 5.5 L15 5.5 L15 11.2 L17.3 11.2 L12.6 17.6 L7.9 11.2 L10.2 11.2 Z" fill="#5ee06a"/>
<circle cx="12.5" cy="20.9" r="2.1" fill="#5cc0a2"/>
</svg>
<div style="position:absolute;left:885.9px;top:503.3px;width:16.4px;height:16.4px;border-radius:50%;background:#5b5f5f"></div>
<div style="position:absolute;left:438.2px;top:639.7px;width:205.5px;height:80.1px;background:#353b3b;border:2px solid #383f3f;border-radius:6px;overflow:hidden"><div style="position:absolute;left:0;top:0;width:12px;height:100%;background:#4a5857"></div></div>
<svg style="position:absolute;left:459.3px;top:646.3px" width="36" height="34" viewBox="0 0 36 34">
<path d="M6.8 6.2 Q9.5 10.5 12.8 18.4" stroke="#0f8c8c" stroke-width="1.4" fill="none"/>
<path d="M17.6 3.8 L17.6 18.4" stroke="#c6d621" stroke-width="1.5" fill="none"/>
<path d="M27.4 6.2 L22.7 18.4" stroke="#e8861f" stroke-width="1.5" fill="none"/>
<rect x="3.5" y="19.1" width="29" height="11.5" fill="#434b57" stroke="#1aa7b2" stroke-width="1"/>
<path d="M23.9 21.9 L26.8 23.4 L23.9 24.9 Z" fill="#5ee06a"/>
<rect x="28.5" y="22" width="1.8" height="2.8" fill="#5ee06a"/>
</svg>
<div style="position:absolute;left:584.9000000000001px;top:650.1px;width:50.3px;height:25.9px;background:#364b47;border:1px solid #4c615d;border-radius:5px"></div><svg style="position:absolute;left:585.9px;top:650.1px" width="25" height="28" viewBox="0 0 25 28">
<rect x="5.9" y="4.5" width="13.2" height="4.1" fill="#62b9a2"/>
<path d="M6.5 11.3 L12.5 16 L18.5 11.3" fill="none" stroke="#5ee06a" stroke-width="1.6" stroke-linecap="round" stroke-linejoin="round"/>
<path d="M6.8 17 L12.5 21.5 L18.2 17" fill="none" stroke="#3f7d53" stroke-width="1.7" stroke-linecap="round" stroke-linejoin="round"/>
</svg><svg style="position:absolute;left:610.9px;top:650.1px" width="25" height="28" viewBox="0 0 25 28">
<path d="M10.2 5.5 L15 5.5 L15 11.2 L17.3 11.2 L12.6 17.6 L7.9 11.2 L10.2 11.2 Z" fill="#5ee06a"/>
<circle cx="12.5" cy="20.9" r="2.1" fill="#5cc0a2"/>
</svg>
<div style="position:absolute;left:537.3px;top:687.3px;width:16.4px;height:16.4px;border-radius:50%;background:#5b5f5f"></div>
<div style="position:absolute;left:279.2px;top:275.2px;width:10.5px;height:10.5px;border-radius:50%;background:#4a86f7;border:1.45px solid #fff"></div>
<svg style="position:absolute;left:563.7px;top:274px" width="16" height="16" viewBox="0 0 16 16"><circle cx="8" cy="8" r="5.9" fill="#fff" stroke="#4285f4" stroke-width="1.8"/><path d="M4.7 8 L11.3 8 M8 4.7 L8 11.3" stroke="#4285f4" stroke-width="1.6"/></svg>
<div style="position:absolute;left:1237px;top:-4px;width:8px;height:708.7px;background:#424242;border-radius:3px"></div>
<div style="position:absolute;left:1249px;top:0px;width:4px;height:779px;background:#000;"></div>
<div style="position:absolute;left:1253px;top:0px;width:485px;height:208.6px;background:#202020;"></div>
<div style="position:absolute;left:1253px;top:208.6px;width:485px;height:4.2px;background:#000;"></div>
<div style="position:absolute;left:1253px;top:212.8px;width:485px;height:566.2px;background:#202020;"></div>
<div style="position:absolute;left:1738px;top:0px;width:4px;height:779px;background:#181818;"></div>
<div style="position:absolute;left:1476.5px;top:0px;width:37.5px;height:1.2px;background:#d8d8d8;"></div>
<svg style="position:absolute;left:1718px;top:217px" width="14" height="14" viewBox="0 0 14 14"><path d="M2.4 2.4 L11.4 11.4 M11.4 2.4 L2.4 11.4" stroke="#fff" stroke-width="1.7"/></svg>
<div style="position:absolute;left:1253px;top:235.2px;width:485px;height:1px;background:#161616;"></div>
<div style="position:absolute;left:1499px;top:238.1px;width:233.8px;height:19px;background:#1c1c1c;border:1px solid #4a4a4a;border-radius:3px"></div>
<div style="position:absolute;left:1253px;top:261.6px;width:485px;height:1px;background:#161616;"></div>
<svg style="position:absolute;left:1256px;top:270px" width="14" height="10" viewBox="0 0 14 10"><path d="M0.9 2.4 L13 2.4 L6.9 9.2 Z" fill="#fff"/></svg>
<div style="position:absolute;left:1504px;top:294px;width:12px;height:12px;background:#1a1a1a;border:1px solid #5c5c5c;border-radius:1px"></div>
<div style="position:absolute;left:1504px;top:320px;width:12px;height:12px;background:#1a1a1a;border:1px solid #5c5c5c;border-radius:1px"></div>
<div style="position:absolute;left:1504px;top:346px;width:12px;height:12px;background:#1a1a1a;border:1px solid #5c5c5c;border-radius:1px"></div>
<div style="position:absolute;left:1504px;top:372px;width:14px;height:14px;background:#1a79d8;border-radius:1px"></div>
<svg style="position:absolute;left:1504px;top:372px" width="14" height="14" viewBox="0 0 14 14"><path d="M2.5 7 L5.3 9.9 L11.8 2.4" fill="none" stroke="#fff" stroke-width="1.35"/></svg>
<div style="position:absolute;left:1504px;top:398px;width:12px;height:12px;background:#1a1a1a;border:1px solid #5c5c5c;border-radius:1px"></div>
<div style="position:absolute;left:1504px;top:424px;width:14px;height:14px;background:#1a79d8;border-radius:1px"></div>
<svg style="position:absolute;left:1504px;top:424px" width="14" height="14" viewBox="0 0 14 14"><path d="M2.5 7 L5.3 9.9 L11.8 2.4" fill="none" stroke="#fff" stroke-width="1.35"/></svg>
<div style="position:absolute;left:1504px;top:450px;width:14px;height:14px;background:#1a79d8;border-radius:1px"></div>
<svg style="position:absolute;left:1504px;top:450px" width="14" height="14" viewBox="0 0 14 14"><path d="M2.5 7 L5.3 9.9 L11.8 2.4" fill="none" stroke="#fff" stroke-width="1.35"/></svg>
<div style="position:absolute;left:1504px;top:476px;width:12px;height:12px;background:#1a1a1a;border:1px solid #5c5c5c;border-radius:1px"></div>
<div style="position:absolute;left:1288px;top:419px;width:241px;height:48.5px;background:transparent;border:2px solid #f7a01f;border-radius:3.5px"></div>
<div style="position:absolute;left:1253px;top:496.3px;width:485px;height:1px;background:#161616;"></div>
<div style="position:absolute;left:1499px;top:499px;width:233.9px;height:18.1px;background:#2f2f2f;border:1px solid #585858;border-radius:3px"></div>
<svg style="position:absolute;left:1717px;top:506px" width="12" height="8" viewBox="0 0 12 8"><path d="M1.4 1.4 L9.7 1.4 L5.55 6.5 Z" fill="#fff"/></svg>
<div class="t" style="left:126.2px;top:128.92px;font-size:9.6px;line-height:14px;color:#fff;letter-spacing:0.313px;">&lt;Image/Depth&gt;</div>
<div class="t" style="left:125.6px;top:140.92px;font-size:9.6px;line-height:14px;color:#fff;letter-spacing:0.145px;">Camera Depth Map</div>
<div class="t" style="left:227.1px;top:128.92px;font-size:9.6px;line-height:14px;color:#fff;letter-spacing:0.361px;">&lt;Image/Color&gt;</div>
<div class="t" style="left:226.5px;top:140.92px;font-size:9.6px;line-height:14px;color:#fff;letter-spacing:0.121px;">Camera Color Image</div>
<div class="t" style="left:332.9px;top:128.92px;font-size:9.6px;line-height:14px;color:#fff;letter-spacing:0.061px;">&lt;Cloud(XYZ)&gt;</div>
<div class="t" style="left:332.3px;top:140.92px;font-size:9.6px;line-height:14px;color:#fff;letter-spacing:0.279px;">Point Cloud</div>
<div class="t" style="left:412.2px;top:128.92px;font-size:9.6px;line-height:14px;color:#fff;letter-spacing:-0.061px;">&lt;Cloud(XYZ-RGB)&gt;</div>
<div class="t" style="left:411.6px;top:140.92px;font-size:9.6px;line-height:14px;color:#fff;letter-spacing:0.201px;">Colored Point Cloud</div>
<div class="t" style="left:642.8px;top:128.92px;font-size:9.6px;line-height:14px;color:#fff;letter-spacing:0.313px;">&lt;Image/Depth&gt;</div>
<div class="t" style="left:642.2px;top:140.92px;font-size:9.6px;line-height:14px;color:#fff;letter-spacing:0.145px;">Camera Depth Map</div>
<div class="t" style="left:743.7px;top:128.92px;font-size:9.6px;line-height:14px;color:#fff;letter-spacing:0.361px;">&lt;Image/Color&gt;</div>
<div class="t" style="left:743.1px;top:140.92px;font-size:9.6px;line-height:14px;color:#fff;letter-spacing:0.121px;">Camera Color Image</div>
<div class="t" style="left:849.5px;top:128.92px;font-size:9.6px;line-height:14px;color:#fff;letter-spacing:0.061px;">&lt;Cloud(XYZ)&gt;</div>
<div class="t" style="left:848.9px;top:140.92px;font-size:9.6px;line-height:14px;color:#fff;letter-spacing:0.279px;">Point Cloud</div>
<div class="t" style="left:928.8px;top:128.92px;font-size:9.6px;line-height:14px;color:#fff;letter-spacing:-0.061px;">&lt;Cloud(XYZ-RGB)&gt;</div>
<div class="t" style="left:928.2px;top:140.92px;font-size:9.6px;line-height:14px;color:#fff;letter-spacing:0.201px;">Colored Point Cloud</div>
<div class="t" style="left:40.2px;top:214.92px;font-size:9.6px;line-height:14px;color:#fff;letter-spacing:0.371px;">&lt;Image&gt;</div>
<div class="t" style="left:39.6px;top:226.92px;font-size:9.6px;line-height:14px;color:#fff;letter-spacing:0.232px;">Unnamed</div>
<div class="t" style="left:40.2px;top:332.92px;font-size:9.6px;line-height:14px;color:#fff;letter-spacing:0.371px;">&lt;Image&gt;</div>
<div class="t" style="left:39.6px;top:344.92px;font-size:9.6px;line-height:14px;color:#fff;letter-spacing:0.232px;">Unnamed</div>
<div class="t" style="left:306.2px;top:209.92px;font-size:9.6px;line-height:14px;color:#fff;letter-spacing:0.170px;">&lt;Cloud(XYZ)&gt;</div>
<div class="t" style="left:305.6px;top:222.92px;font-size:9.6px;line-height:14px;color:#fff;letter-spacing:0.289px;">Point Cloud</div>
<div class="t" style="left:306.2px;top:328.92px;font-size:9.6px;line-height:14px;color:#fff;letter-spacing:0.248px;">&lt;Cloud(XYZ-Normal)&gt;</div>
<div class="t" style="left:305.6px;top:340.92px;font-size:9.6px;line-height:14px;color:#fff;letter-spacing:0.260px;">Point Cloud with Normals</div>
<div class="t" style="left:678.0px;top:209.92px;font-size:9.6px;line-height:14px;color:#fff;letter-spacing:0.254px;">&lt;Image&gt;</div>
<div class="t" style="left:677.4px;top:222.92px;font-size:9.6px;line-height:14px;color:#fff;letter-spacing:0.148px;">Unnamed</div>
<div class="t" style="left:678.0px;top:328.92px;font-size:9.6px;line-height:14px;color:#fff;letter-spacing:0.254px;">&lt;Image&gt;</div>
<div class="t" style="left:677.4px;top:340.92px;font-size:9.6px;line-height:14px;color:#fff;letter-spacing:0.148px;">Unnamed</div>
<div class="t" style="left:940.0px;top:209.92px;font-size:9.6px;line-height:14px;color:#fff;letter-spacing:0.170px;">&lt;Cloud(XYZ)&gt;</div>
<div class="t" style="left:939.4px;top:222.92px;font-size:9.6px;line-height:14px;color:#fff;letter-spacing:0.289px;">Point Cloud</div>
<div class="t" style="left:940.0px;top:328.92px;font-size:9.6px;line-height:14px;color:#fff;letter-spacing:0.248px;">&lt;Cloud(XYZ-Normal)&gt;</div>
<div class="t" style="left:939.4px;top:340.92px;font-size:9.6px;line-height:14px;color:#fff;letter-spacing:0.260px;">Point Cloud with Normals</div>
<div class="t" style="left:26.1px;top:443.92px;font-size:9.6px;line-height:14px;color:#fff;letter-spacing:0.250px;">&lt;Cloud(XYZ-Normal) [] &gt;</div>
<div class="t" style="left:25.5px;top:455.92px;font-size:9.6px;line-height:14px;color:#fff;letter-spacing:0.169px;">Point Clouds Shown in White</div>
<div class="t" style="left:169.5px;top:443.92px;font-size:9.6px;line-height:14px;color:#fff;letter-spacing:0.244px;">&lt;Cloud(XYZ-Normal) [] -&gt;</div>
<div class="t" style="left:168.9px;top:455.92px;font-size:9.6px;line-height:14px;color:#fff;letter-spacing:0.130px;">Point Clouds Shown in Color</div>
<div class="t" style="left:311.4px;top:443.92px;font-size:9.6px;line-height:14px;color:#fff;letter-spacing:0.030px;">&lt;PoseList-&gt;</div>
<div class="t" style="left:310.8px;top:455.92px;font-size:9.6px;line-height:14px;color:#fff;letter-spacing:-0.618px;">Poses</div>
<div class="t" style="left:759.4px;top:426.92px;font-size:9.6px;line-height:14px;color:#fff;letter-spacing:0.250px;">&lt;Cloud(XYZ-Normal) [] &gt;</div>
<div class="t" style="left:758.8px;top:439.92px;font-size:9.6px;line-height:14px;color:#fff;letter-spacing:0.188px;">Point Clouds with Normals</div>
<div class="t" style="left:759.4px;top:544.92px;font-size:9.6px;line-height:14px;color:#fff;letter-spacing:0.253px;">&lt;Cloud(XYZ-Normal)&gt;</div>
<div class="t" style="left:758.8px;top:557.92px;font-size:9.6px;line-height:14px;color:#fff;letter-spacing:0.159px;">Merged Point Cloud</div>
<div class="t" style="left:459.4px;top:609.92px;font-size:9.6px;line-height:14px;color:#fff;letter-spacing:0.270px;">&lt;Cloud(XYZ-Normal)&gt;</div>
<div class="t" style="left:458.8px;top:622.92px;font-size:9.6px;line-height:14px;color:#fff;letter-spacing:0.098px;">Unnamed</div>
<div class="t" style="left:459.4px;top:728.92px;font-size:9.6px;line-height:14px;color:#fff;letter-spacing:0.270px;">&lt;Cloud(XYZ-Normal)&gt;</div>
<div class="t" style="left:458.8px;top:740.92px;font-size:9.6px;line-height:14px;color:#fff;letter-spacing:0.098px;">Unnamed</div>
<div class="t" style="left:129.4px;top:70.75px;font-size:13px;line-height:18px;color:#e2914f;letter-spacing:0.074px;-webkit-text-stroke:0.2px #e2914f;">Capture Images from Camera (1)</div>
<div class="t" style="left:332.5px;top:72.94px;font-size:11px;line-height:15px;color:#e0b23c;letter-spacing:0.000px;-webkit-text-stroke:0.35px #e0b23c;">?</div>
<div class="t" style="left:645.4px;top:70.75px;font-size:13px;line-height:18px;color:#e2914f;letter-spacing:0.212px;-webkit-text-stroke:0.2px #e2914f;">Capture Images from Camera (2)</div>
<div class="t" style="left:852.1px;top:72.94px;font-size:11px;line-height:15px;color:#e0b23c;letter-spacing:0.000px;-webkit-text-stroke:0.35px #e0b23c;">?</div>
<div class="t" style="left:43.1px;top:290.75px;font-size:13px;line-height:18px;color:#fff;letter-spacing:-0.553px;-webkit-text-stroke:0.2px #fff;">Accept All (1)</div>
<div class="t" style="left:121.9px;top:292.94px;font-size:11px;line-height:15px;color:#e0b23c;letter-spacing:0.000px;-webkit-text-stroke:0.35px #e0b23c;">?</div>
<div class="t" style="left:309.3px;top:286.75px;font-size:13px;line-height:18px;color:#fff;letter-spacing:-0.526px;-webkit-text-stroke:0.2px #fff;">Calc Normals of Point Cloud and Filter It (1)</div>
<div class="t" style="left:547.1px;top:288.94px;font-size:11px;line-height:15px;color:#e0b23c;letter-spacing:0.000px;-webkit-text-stroke:0.35px #e0b23c;">?</div>
<div class="t" style="left:680.1px;top:286.75px;font-size:13px;line-height:18px;color:#fff;letter-spacing:-0.384px;-webkit-text-stroke:0.2px #fff;">Accept All (2)</div>
<div class="t" style="left:761.1px;top:288.94px;font-size:11px;line-height:15px;color:#e0b23c;letter-spacing:0.000px;-webkit-text-stroke:0.35px #e0b23c;">?</div>
<div class="t" style="left:942px;top:286.75px;font-size:13px;line-height:18px;color:#fff;letter-spacing:-0.480px;-webkit-text-stroke:0.2px #fff;">Calc Normals of Point Cloud and Filter It (2)</div>
<div class="t" style="left:1182.1px;top:288.94px;font-size:11px;line-height:15px;color:#e0b23c;letter-spacing:0.000px;-webkit-text-stroke:0.35px #e0b23c;">?</div>
<div class="t" style="left:29.1px;top:519.75px;font-size:13px;line-height:18px;color:#fff;letter-spacing:-0.840px;-webkit-text-stroke:0.2px #fff;">Show Point Clouds and Poses (1)</div>
<div class="t" style="left:208.6px;top:521.94px;font-size:11px;line-height:15px;color:#e0b23c;letter-spacing:0.000px;-webkit-text-stroke:0.35px #e0b23c;">?</div>
<div class="t" style="left:762.5px;top:502.75px;font-size:13px;line-height:18px;color:#fff;letter-spacing:-0.699px;-webkit-text-stroke:0.2px #fff;">Merge Point Clouds (1)</div>
<div class="t" style="left:891.1px;top:504.94px;font-size:11px;line-height:15px;color:#e0b23c;letter-spacing:0.000px;-webkit-text-stroke:0.35px #e0b23c;">?</div>
<div class="t" style="left:462.3px;top:686.75px;font-size:13px;line-height:18px;color:#fff;letter-spacing:-0.461px;-webkit-text-stroke:0.2px #fff;">Accept All (3)</div>
<div class="t" style="left:542.5px;top:688.94px;font-size:11px;line-height:15px;color:#e0b23c;letter-spacing:0.000px;-webkit-text-stroke:0.35px #e0b23c;">?</div>
<div class="t" style="left:1422.6px;top:21.09px;font-size:12px;line-height:16px;color:#fff;letter-spacing:0.105px;">No debug output to display</div>
<div class="t" style="left:1273.5px;top:68.09px;font-size:12px;line-height:16px;color:#fff;letter-spacing:-0.066px;">Please do one of the followings:</div>
<div class="t" style="left:1273.5px;top:83.09px;font-size:12px;line-height:16px;color:#fff;letter-spacing:-0.052px;">(a) Enable "Debug Output" and run the project to see the debug outputs of all Steps.</div>
<div class="t" style="left:1273.5px;top:98.09px;font-size:12px;line-height:16px;color:#fff;letter-spacing:-0.069px;">(b) Run the project, left click and drag on a Step's "Single Step Execution" button,</div>
<div class="t" style="left:1273.5px;top:113.09px;font-size:12px;line-height:16px;color:#fff;letter-spacing:-0.041px;">and click on "Visualize Output" to see the Step's output.</div>
<div class="t" style="left:1259px;top:216.09px;font-size:12px;line-height:16px;color:#fff;letter-spacing:-0.325px;">Step Parameters</div>
<div class="t" style="left:1279.1px;top:241.09px;font-size:12px;line-height:16px;color:#fff;letter-spacing:-0.241px;">Step Name</div>
<div class="t" style="left:1507.4px;top:241.09px;font-size:12px;line-height:16px;color:#fff;letter-spacing:-0.103px;">Calc Normals of Point Cloud and Filter It_1</div>
<div class="t" style="left:1279.1px;top:268.09px;font-size:12px;line-height:16px;color:#fff;letter-spacing:-0.481px;font-weight:700;">Execution Flags</div>
<div class="t" style="left:1399.4px;top:294.09px;font-size:12px;line-height:16px;color:#fff;letter-spacing:-0.136px;">Visualize Outputs</div>
<div class="t" style="left:1377px;top:320.09px;font-size:12px;line-height:16px;color:#fff;letter-spacing:-0.164px;">Show Outputs as Text</div>
<div class="t" style="left:1428px;top:346.09px;font-size:12px;line-height:16px;color:#fff;letter-spacing:-0.232px;">Reuse Input</div>
<div class="t" style="left:1348px;top:372.09px;font-size:12px;line-height:16px;color:#fff;letter-spacing:0.072px;">Continue Given No Output</div>
<div class="t" style="left:1433px;top:398.09px;font-size:12px;line-height:16px;color:#fff;letter-spacing:-0.330px;">Reload File</div>
<div class="t" style="left:1303.5px;top:424.09px;font-size:12px;line-height:16px;color:#fff;letter-spacing:-0.119px;">Trigger Control Flow Given No Ou...</div>
<div class="t" style="left:1309.5px;top:450.09px;font-size:12px;line-height:16px;color:#fff;letter-spacing:-0.044px;">Trigger Control Flow Given Output</div>
<div class="t" style="left:1301px;top:476.09px;font-size:12px;line-height:16px;color:#fff;letter-spacing:-0.037px;">Notify Project to Exit Given No Ou...</div>
<div class="t" style="left:1279.1px;top:502.09px;font-size:12px;line-height:16px;color:#fff;letter-spacing:-0.267px;font-weight:700;">Normal Calc Methods</div>
<div class="t" style="left:1508px;top:502.09px;font-size:12px;line-height:16px;color:#fff;letter-spacing:0.086px;">NormalEstimation</div>
</body></html>
